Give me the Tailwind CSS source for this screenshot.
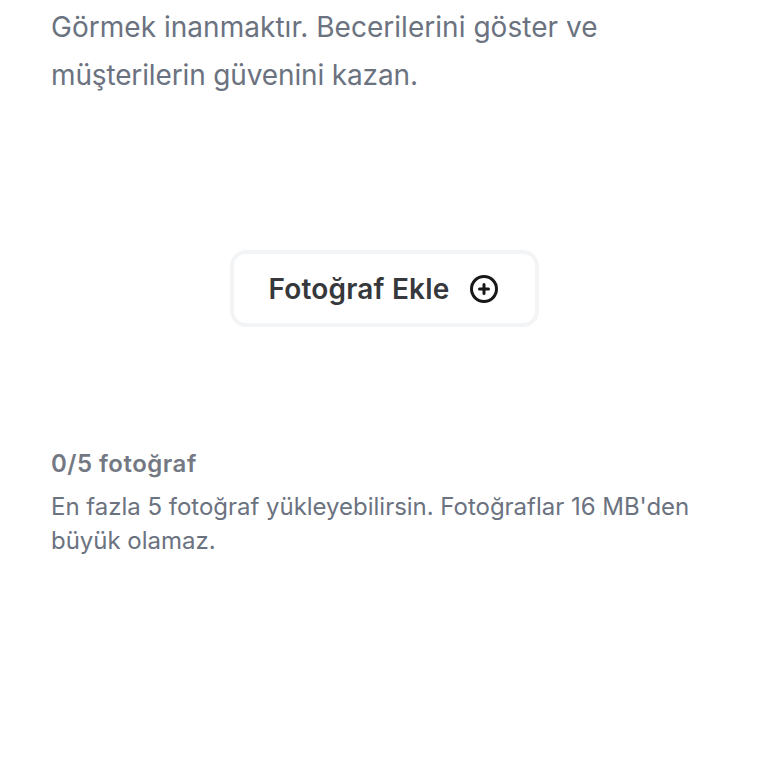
<!DOCTYPE html>
<html lang="tr">
<head>
    <meta charset="UTF-8">
    <title>Fotoğraf Ekle</title>
    <script src="https://cdn.jsdelivr.net/npm/@tailwindcss/browser@4"></script>
</head>
<body class="bg-white font-['Inter',sans-serif] h-[768px] overflow-hidden">
    <div class="px-[51px] pt-[3px]">
        <p class="text-[28px] leading-[48px] text-[#6b7280]">
            <span class="block tracking-[0.03px]">Görmek inanmaktır. Becerilerini göster ve</span>
            <span class="block tracking-[-0.14px]">müşterilerin güvenini kazan.</span>
        </p>

        <div class="flex justify-center mt-[151px]">
            <button class="flex items-center justify-center gap-[20px] w-[309px] h-[77px] pr-[2px] bg-white border-4 border-[#f3f4f6] rounded-2xl">
                <span class="text-[28px] font-semibold tracking-[0.2px] text-[#37383b]">Fotoğraf Ekle</span>
                <svg class="w-7 h-7" viewBox="0 0 28 28" fill="none" stroke="#18181b" stroke-width="3" stroke-linecap="round">
                    <circle cx="14" cy="14" r="12.5"/>
                    <path d="M14 9.5v9M9.5 14h9"/>
                </svg>
            </button>
        </div>

        <p class="mt-[121px] text-[24px] leading-[32px] font-semibold tracking-[0.5px] text-[#737883]">0/5 fotoğraf</p>
        <p class="mt-[10px] text-[24px] leading-[34px] tracking-[-0.02px] text-[#6b7280]">En fazla 5 fotoğraf yükleyebilirsin. Fotoğraflar 16 MB'den büyük olamaz.</p>
    </div>
</body>
</html>
